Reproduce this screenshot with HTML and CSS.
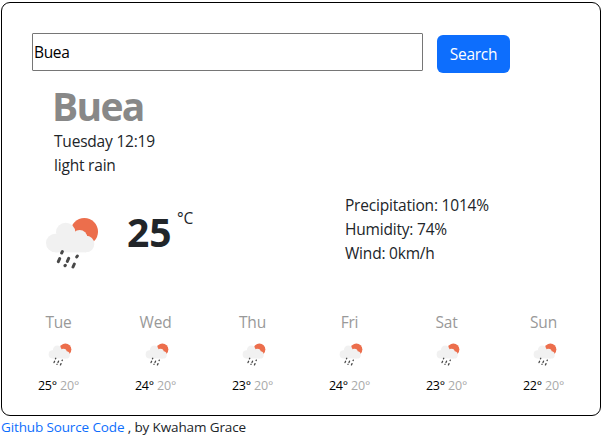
FILE: index.html
```html
<!DOCTYPE html>
<html lang="en">
<head>
<meta charset="utf-8">
<title>Weather</title>
<link rel="stylesheet" href="styles.css">
</head>
<body>
<svg class="defs" aria-hidden="true">
  <symbol id="rain" viewBox="0 0 192 192">
    <circle cx="133" cy="65" r="41" fill="#ec6e4c"/>
    <g fill="#f1f1f1">
      <circle cx="77" cy="67" r="29"/>
      <circle cx="46" cy="99" r="28"/>
      <circle cx="119" cy="83" r="23"/>
      <circle cx="138" cy="102" r="25"/>
      <rect x="46" y="72" width="92" height="55"/>
    </g>
    <path d="M67 125l-2 4M59 146l-4 9M86 145l-4 9M112 138l-2 3M76 166l-1 1M103 162l-4 9" stroke="#484848" stroke-width="9" stroke-linecap="round"/>
  </symbol>
</svg>
<main class="card">
  <form class="search">
    <input type="text" value="Buea" aria-label="City">
    <button type="button">Search</button>
  </form>
  <header class="place">
    <h1>Buea</h1>
    <p class="date">Tuesday 12:19</p>
    <p class="sky">light rain</p>
  </header>
  <section class="now">
    <svg class="big"><use href="#rain"/></svg>
    <strong class="temp">25</strong>
    <span class="unit">°C</span>
    <div class="facts">
      <p>Precipitation: 1014%</p>
      <p>Humidity: 74%</p>
      <p>Wind: 0km/h</p>
    </div>
  </section>
  <section class="forecast">
    <div class="day"><span class="name">Tue</span><svg class="small"><use href="#rain"/></svg><span class="range">25° <i>20°</i></span></div>
    <div class="day"><span class="name">Wed</span><svg class="small"><use href="#rain"/></svg><span class="range">24° <i>20°</i></span></div>
    <div class="day"><span class="name">Thu</span><svg class="small"><use href="#rain"/></svg><span class="range">23° <i>20°</i></span></div>
    <div class="day"><span class="name">Fri</span><svg class="small"><use href="#rain"/></svg><span class="range">24° <i>20°</i></span></div>
    <div class="day"><span class="name">Sat</span><svg class="small"><use href="#rain"/></svg><span class="range">23° <i>20°</i></span></div>
    <div class="day"><span class="name">Sun</span><svg class="small"><use href="#rain"/></svg><span class="range">22° <i>20°</i></span></div>
  </section>
</main>
<footer><a href="#">Github Source Code</a> , by Kwaham Grace</footer>
</body>
</html>
```
FILE: styles.css
```css
* { box-sizing: border-box; }
body {
  margin: 0;
  padding: 2px 0 0 1px;
  background: #fff;
  color: #212529;
  font: 15.5px/24px "Open Sans", "Noto Sans", sans-serif;
  letter-spacing: -0.2px;
  overflow: hidden;
}
h1, p { margin: 0; }
.defs { display: none; }
.card {
  width: 600px;
  height: 414px;
  border: 1px solid #000;
  border-radius: 9px;
  padding: 30px 29px 0 30px;
}
.search { display: flex; gap: 14px; height: 49px; }
input {
  width: 391px;
  height: 38px;
  border: 1px solid #767676;
  border-radius: 1px;
  padding: 1px;
  font: inherit;
  letter-spacing: -0.35px;
  color: #000;
  background: #fff;
}
button {
  width: 73px;
  height: 38px;
  margin-top: 2px;
  padding: 0;
  border: 0;
  border-radius: 6px;
  background: #0d6efd;
  color: #fff;
  font: inherit;
  letter-spacing: -0.3px;
}
.place { padding-left: 22px; height: 111px; }
h1 {
  height: 47px;
  margin-left: -2px;
  font-size: 39px;
  line-height: 48px;
  letter-spacing: -1.7px;
  color: #888;
}
.now { display: flex; height: 117px; }
.big { width: 64px; height: 64px; margin: 17px 0 0 8px; }
.temp {
  width: 50px;
  margin: 15px 0 0 23px;
  font-size: 39px;
  line-height: 48px;
  letter-spacing: 0;
}
.unit { margin-top: 13px; width: 168px; }
.facts { white-space: nowrap; }
.forecast { display: flex; gap: 43px; }
.day {
  flex: 0 0 54px;
  display: flex;
  flex-direction: column;
  align-items: center;
}
.name { margin-left: -1px; color: #999; }
.small { width: 28px; height: 28px; margin: 6px 0 0 1px; }
.range {
  margin: 6px 0 0 -1px;
  font-size: 12.5px;
  white-space: nowrap;
  color: #000;
}
.range i { font-style: normal; color: #aaa; }
footer { font-size: 13.5px; line-height: 22px; letter-spacing: -0.13px; }
footer a { color: #0d6efd; text-decoration: none; }
```
